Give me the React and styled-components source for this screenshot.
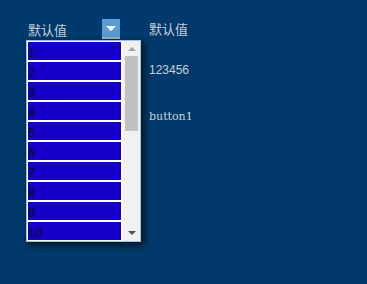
import React from "react";
import styled, { createGlobalStyle } from "styled-components";

const Global = createGlobalStyle`
  html, body {
    margin: 0;
    background: #003a6c;
    height: 100%;
  }
  body {
    font-family: "Liberation Sans", "Noto Sans CJK SC", sans-serif;
  }
`;

const Page = styled.div`
  display: flex;
  gap: 28px;
  padding: 19px 0 0 26px;
`;

const Select = styled.div`
  position: relative;
  width: 95px;
`;

const Head = styled.div`
  display: flex;
  align-items: center;
  height: 20px;
`;

const Label = styled.span`
  padding-left: 2px;
  font-size: 13px;
  color: #c8d0d8;
  font-family: "Noto Sans CJK SC", sans-serif;
`;

const ArrowButton = styled.div`
  margin-left: auto;
  margin-right: 1px;
  width: 18px;
  height: 20px;
  box-sizing: border-box;
  background: #5a9bd3;
  border-bottom: 2px solid #a8b4c0;
  display: flex;
  align-items: center;
  justify-content: center;
`;

const Triangle = styled.span`
  width: 0;
  height: 0;
  border-left: 5px solid transparent;
  border-right: 5px solid transparent;
  border-top: 5px solid #fff;
`;

const List = styled.div`
  position: absolute;
  top: 21px;
  left: 0;
  width: 115px;
  height: 202px;
  box-sizing: border-box;
  border: 1px solid #9cc0ea;
  background: #fff;
  box-shadow: 3px 3px 6px 1px rgba(10, 10, 10, 0.7);
  display: flex;
`;

const Items = styled.div`
  padding: 1px;
  width: 94px;
`;

const Item = styled.div`
  height: 18px;
  margin-bottom: 2px;
  background: #1400c8;
  color: #111;
  font-size: 13px;
  line-height: 21px;
  overflow: hidden;
`;

const Scrollbar = styled.div`
  margin-left: 1px;
  width: 17px;
  background: #f1f1f1;
  display: flex;
  flex-direction: column;
  align-items: center;
`;

const ScrollArrow = styled.span`
  margin: ${(p) => (p.$down ? "auto 0 6px" : "6px 0 0")};
  width: 0;
  height: 0;
  border-left: 4px solid transparent;
  border-right: 4px solid transparent;
  ${(p) =>
    p.$down
      ? "border-top: 4px solid #505050;"
      : "border-bottom: 4px solid #a3a3a3;"}
`;

const Thumb = styled.div`
  margin-top: 5px;
  width: 13px;
  height: 75px;
  background: #c1c1c1;
`;

const Side = styled.div`
  display: flex;
  flex-direction: column;
  color: #c8d0d8;
`;

const SideLabel = styled.div`
  height: 20px;
  line-height: 20px;
  font-size: 13px;
  font-family: "Noto Sans CJK SC", sans-serif;
`;

const Value = styled.div`
  margin-top: 23px;
  font-size: 12px;
  line-height: 16px;
`;

const PlainButton = styled.button`
  margin-top: 32px;
  padding: 0;
  border: none;
  background: transparent;
  color: #c8d0d8;
  font-family: "DejaVu Serif", serif;
  font-size: 11px;
  text-align: left;
`;

export default function App() {
  const items = Array.from({ length: 10 }, (_, i) => i + 1);
  return (
    <>
      <Global />
      <Page>
        <Select>
          <Head>
            <Label>默认值</Label>
            <ArrowButton>
              <Triangle />
            </ArrowButton>
          </Head>
          <List>
            <Items>
              {items.map((n) => (
                <Item key={n}>{n}</Item>
              ))}
            </Items>
            <Scrollbar>
              <ScrollArrow />
              <Thumb />
              <ScrollArrow $down />
            </Scrollbar>
          </List>
        </Select>
        <Side>
          <SideLabel>默认值</SideLabel>
          <Value>123456</Value>
          <PlainButton>button1</PlainButton>
        </Side>
      </Page>
    </>
  );
}
